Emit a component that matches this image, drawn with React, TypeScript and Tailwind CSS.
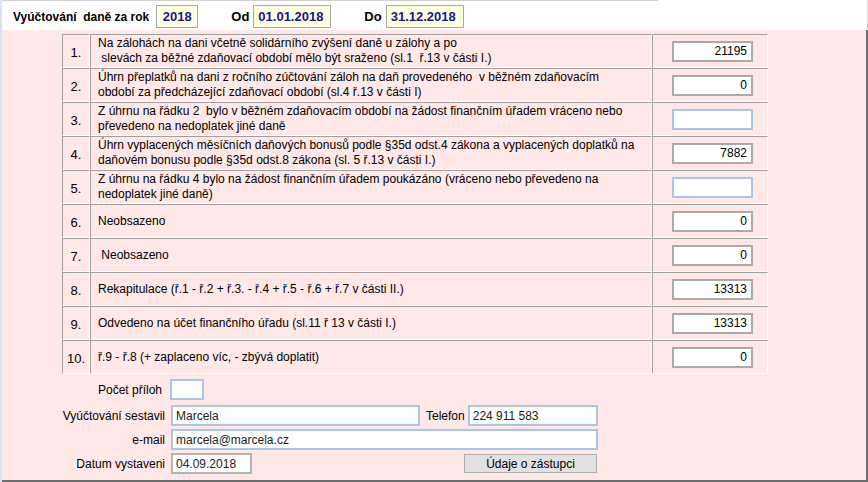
import React from "react";

type Row = { n: string; t: string[]; v: string; blue?: boolean };

const rows: Row[] = [
  {
    n: "1.",
    t: [
      "Na zálohách na dani včetně solidárního zvýšení daně u zálohy a po",
      " slevách za běžné zdaňovací období mělo být sraženo (sl.1  ř.13 v části I.)",
    ],
    v: "21195",
  },
  {
    n: "2.",
    t: [
      "Úhrn přeplatků na dani z ročního zúčtování záloh na daň provedeného  v běžném zdaňovacím",
      "období za předcházející zdaňovací období (sl.4 ř.13 v části I)",
    ],
    v: "0",
  },
  {
    n: "3.",
    t: [
      "Z úhrnu na řádku 2  bylo v běžném zdaňovacím období na žádost finančním úřadem vráceno nebo",
      "převedeno na nedoplatek jiné daně",
    ],
    v: "",
    blue: true,
  },
  {
    n: "4.",
    t: [
      "Úhrn vyplacených měsíčních daňových bonusů podle §35d odst.4 zákona a vyplacených doplatků na",
      "daňovém bonusu podle §35d odst.8 zákona (sl. 5 ř.13 v části I.)",
    ],
    v: "7882",
  },
  {
    n: "5.",
    t: [
      "Z úhrnu na řádku 4 bylo na žádost finančním úřadem poukázáno (vráceno nebo převedeno na",
      "nedoplatek jiné daně)",
    ],
    v: "",
    blue: true,
  },
  { n: "6.", t: ["Neobsazeno"], v: "0" },
  { n: "7.", t: [" Neobsazeno"], v: "0" },
  { n: "8.", t: ["Rekapitulace (ř.1 - ř.2 + ř.3. - ř.4 + ř.5 - ř.6 + ř.7 v části II.)"], v: "13313" },
  { n: "9.", t: ["Odvedeno na účet finančního úřadu (sl.11 ř 13 v části I.)"], v: "13313" },
  { n: "10.", t: ["ř.9 - ř.8 (+ zaplaceno víc, - zbývá doplatit)"], v: "0" },
];

const cell =
  "border border-t-[#a0a0a0] border-l-[#a0a0a0] border-r-white border-b-white";

function HeaderBox({ text, w, center }: { text: string; w: string; center?: boolean }) {
  return (
    <div
      className={`${w} h-[23px] border border-[#a8a8a8] bg-[#ffffe1] flex items-center font-bold text-[#16168a] text-[13px] ${
        center ? "justify-center" : "pl-[4px]"
      }`}
    >
      {text}
    </div>
  );
}

export default function App() {
  return (
    <div
      className="w-[868px] h-[482px] flex bg-white text-[12px] text-black overflow-hidden"
      style={{ fontFamily: '"Liberation Sans", Arial, sans-serif' }}
    >
      <div className="w-[2px] h-full bg-[#d8e4f2]" />
      <div className="flex-1 flex flex-col">
        {/* header */}
        <div className="h-[30px] flex flex-col border-r border-r-[#d8d8d8]">
          <div className="h-[1px] w-[656px] bg-[#d0d0d0]" />
          <div className="flex items-center h-[27px] mt-[2px]">
            <span className="ml-[11px] font-bold whitespace-pre">Vyúčtování  daně za rok</span>
            <div className="ml-[7px]">
              <HeaderBox text="2018" w="w-[42px]" center />
            </div>
            <span className="ml-[33px] font-bold text-[13px]">Od</span>
            <div className="ml-[4px]">
              <HeaderBox text="01.01.2018" w="w-[78px]" />
            </div>
            <span className="ml-[33px] font-bold text-[13px]">Do</span>
            <div className="ml-[4px]">
              <HeaderBox text="31.12.2018" w="w-[78px]" />
            </div>
          </div>
        </div>

        {/* pink body */}
        <div className="flex-1 bg-[#ffe8e7] border-r-2 border-b-2 border-[#6e6e6e] flex flex-col">
          <div className="ml-[60px] mt-[4px] w-[706px] flex flex-col">
            {rows.map((r) => (
              <div key={r.n} className="flex h-[34px]">
                <div className={`${cell} w-[28px] flex items-center justify-center pt-[3px] text-[13px]`}>{r.n}</div>
                <div
                  className={`${cell} w-[562px] flex flex-col justify-center pl-[7px] leading-[15px] whitespace-pre`}
                >
                  {r.t.map((line, i) => (
                    <span key={i}>{line}</span>
                  ))}
                </div>
                <div className={`${cell} w-[116px] flex items-center pl-[19px]`}>
                  <div
                    className={`w-[81px] h-[21px] border-2 bg-white flex items-center justify-end pr-[4px] ${
                      r.blue ? "border-[#abc6e2]" : "border-[#ababab]"
                    }`}
                  >
                    {r.v}
                  </div>
                </div>
              </div>
            ))}
          </div>

          {/* form */}
          <div className="flex flex-col mt-[5px]">
            <div className="flex items-center h-[21px]">
              <div className="w-[160px] text-right">Počet příloh</div>
              <div className="ml-[8px] w-[34px] h-[21px] border-2 border-[#abc6e2] bg-white" />
            </div>
            <div className="flex items-center h-[21px] mt-[5px]">
              <div className="w-[163px] text-right">Vyúčtování sestavil</div>
              <div className="ml-[6px] w-[249px] h-[21px] border-2 border-[#abc6e2] bg-white flex items-center pl-[3px] text-[#222]">
                Marcela
              </div>
              <span className="ml-[6px]">Telefon</span>
              <div className="ml-[3px] w-[130px] h-[21px] border-2 border-[#abc6e2] bg-white flex items-center pl-[3px] text-[#222]">
                224 911 583
              </div>
            </div>
            <div className="flex items-center h-[21px] mt-[3px]">
              <div className="w-[163px] text-right">e-mail</div>
              <div className="ml-[6px] w-[427px] h-[21px] border-2 border-[#abc6e2] bg-white flex items-center pl-[3px] text-[#222]">
                marcela@marcela.cz
              </div>
            </div>
            <div className="flex items-center h-[21px] mt-[3px]">
              <div className="w-[163px] text-right">Datum vystaveni</div>
              <div className="ml-[6px] w-[81px] h-[21px] border-2 border-[#b4b4b4] bg-white flex items-center pl-[3px] text-[#222]">
                04.09.2018
              </div>
              <div className="ml-[212px] w-[133px] h-[19px] border border-[#adadad] bg-[#e1e1e1] flex items-center justify-center">
                Údaje o zástupci
              </div>
            </div>
          </div>
        </div>
      </div>
    </div>
  );
}
